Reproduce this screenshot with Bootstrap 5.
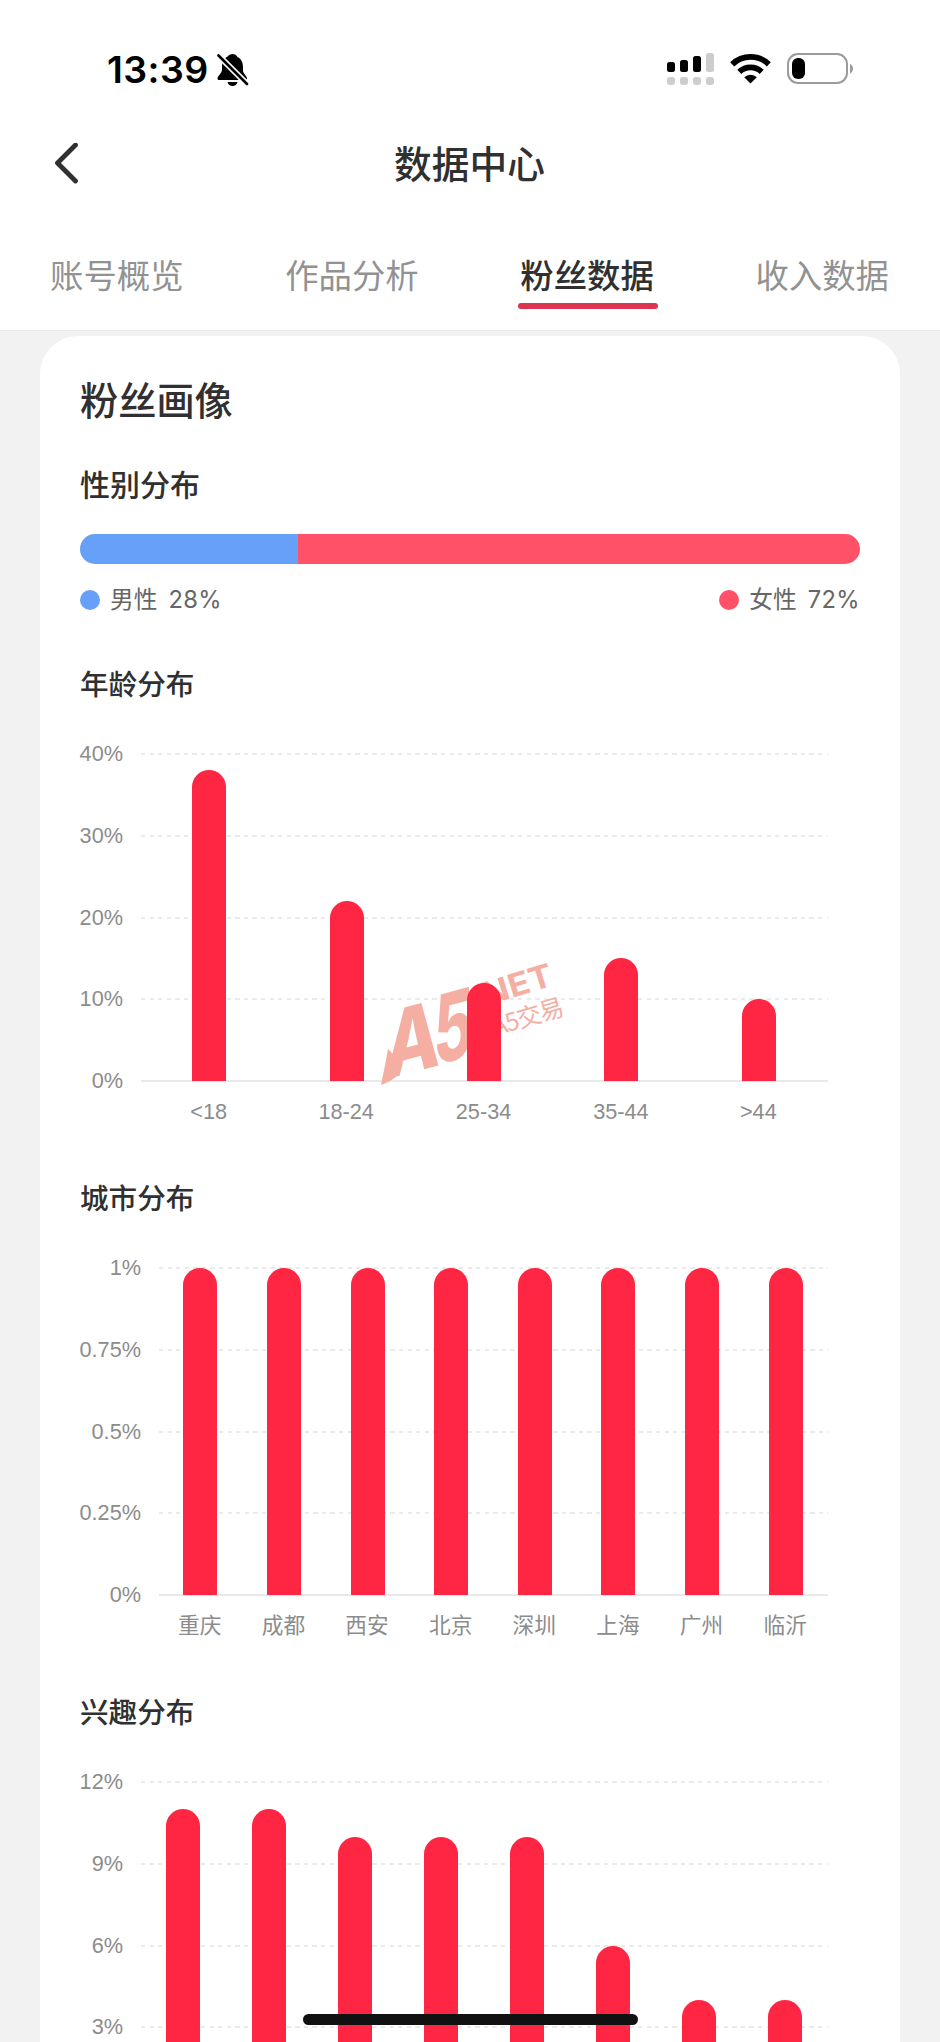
<!DOCTYPE html>
<html lang="zh-CN">
<head>
<meta charset="utf-8">
<meta name="viewport" content="width=device-width, initial-scale=1">
<title>数据中心</title>
<link rel="stylesheet" href="https://cdn.jsdelivr.net/npm/bootstrap@5.3.0/dist/css/bootstrap.min.css">
<style>
  html, body { height: 2042px; overflow: hidden; }
  body { background: #f2f2f2; color: #303030; font-family: "Liberation Sans", "Noto Sans CJK SC", sans-serif; }
  svg { display: block; flex: none; }
  .app-head { height: 331px; border-bottom: 1px solid #ebebeb; }
  .status { height: 110px; padding: 53px 86px 0 107px; color: #000; }
  .clock { font: 600 37.5px/34px Inter, sans-serif; letter-spacing: .45px; width: 110px; }
  .title-bar { height: 108px; padding: 0 53px; }
  .title-bar h1 { font-size: 37.7px; line-height: 56px; font-weight: 500; padding-top: 2px; }
  .tabs { padding: 32px 51px 0 50px; }
  .tabs .nav-link { padding: 0; font-size: 33.4px; line-height: 54px; color: #929292; }
  .tabs .nav-link.active { color: #303030; font-weight: 500; position: relative; }
  .tabs .nav-link.active::after { content: ""; position: absolute; left: -2px; right: -4px; top: 53px; height: 6px; border-radius: 3px; background: #dc354f; }
  .panel { margin: 5px 40px 0; padding: 38px 40px 0; height: 1706px; overflow: hidden; border-radius: 38px 38px 0 0; }
  .panel h2 { font-size: 38.2px; line-height: 56px; font-weight: 500; margin: 0 0 38px; }
  .panel h3 { font-size: 28.6px; line-height: 36px; font-weight: 500; margin: 0; }
  .panel .gender-title { font-size: 30px; margin-bottom: 30px; }
  .gender { height: 30px; border-radius: 15px; }
  .male { background: #66a0f8; }
  .female { background: #ff5268; }
  .legend-row { font: 23.7px/34px Inter, "Noto Sans CJK SC", sans-serif; color: #666; margin-top: 19px; margin-bottom: 50px; }
  .num { margin-left: 11px; letter-spacing: .4px; }
  .dot { width: 20px; height: 20px; border-radius: 50%; margin-right: 10px; }
  .section { height: 514px; }
  .chart { margin: 51px 32px 0 0; gap: 18px; font-size: 21.7px; color: #8c8c8c; }
  .y-axis { height: 327px; width: 43px; text-align: right; white-space: nowrap; }
  .y-wide { width: 61px; }
  .y-axis span { height: 0; line-height: 0; align-self: flex-end; }
  .plot { height: 327px; }
  .grid-lines i { height: 2px; margin: -1px 0; background: repeating-linear-gradient(90deg, #eaeaea 0 4.3px, transparent 4.3px 8.57px); }
  .grid-lines i:last-child { background: #e9e9e9; }
  .bars > div { flex: 1 1 0; }
  .bars b { width: 34px; margin-left: -1px; border-radius: 17px 17px 0 0; background: #ff2643; }
  .x-axis { margin-top: 14px; line-height: 34px; }
  .x-axis span { flex: 1 1 0; text-align: center; margin-left: -1px; margin-right: 1px; }
  .seal { left: 229px; top: 196px; }
  .home-bar { left: 303px; top: 2014px; width: 335px; height: 11px; border-radius: 6px; background: #111; }
</style>
</head>
<body class="position-relative">
<header class="app-head bg-white">
  <div class="status d-flex align-items-start">
    <div class="clock">13:39</div>
    <svg width="32" height="34" viewBox="0 0 32 34">
      <path d="M15.500 1c-2 0-4 1-4.800 2.500C6.500 5.500 5 9 5 14v3c0 3-4.500 6-4.500 8.500 0 1 .8 1.500 2 1.500h26c1 0 1.500-.4 1.500-1.300 0-2.700-4-5-4-8.200v-3c0-5-1.500-8.500-5.500-10.500C19.500 2 17.500 1 15.500 1Z"/>
      <path d="M10.500 29h10c-.7 2.500-2.500 4-5 4s-4.300-1.500-5-4Z"/>
      <path d="M0 1 31 32" stroke="#fff" stroke-width="6"/>
      <path d="M1.500 2.500 30 31" stroke="#000" stroke-width="2.600" stroke-linecap="round"/>
    </svg>
    <svg class="ms-auto" width="48" height="32" viewBox="0 0 48 32">
      <rect x="0" y="9" width="8" height="10" rx="2.500"/><rect x="13" y="7" width="8" height="12" rx="2.500"/><rect x="26" y="3" width="8" height="16" rx="2.500"/>
      <g fill="#cdcdcd"><rect x="39" y="0" width="8" height="19" rx="2.500"/><rect x="0" y="24" width="8" height="8" rx="3"/><rect x="13" y="24" width="8" height="8" rx="3"/><rect x="26" y="24" width="8" height="8" rx="3"/><rect x="39" y="24" width="8" height="8" rx="3"/></g>
    </svg>
    <svg width="41" height="31" viewBox="0 0 41 31" style="margin-left:15px">
      <g fill="none" stroke="#000" stroke-width="5.800"><path d="M2.200 11.300a26.500 26.500 0 0 1 36.600 0"/><path d="M9.300 18.900a16.200 16.200 0 0 1 22.400 0"/></g>
      <path d="M20.500 30.500 14.200 24.200a9 9 0 0 1 12.600 0Z"/>
    </svg>
    <svg width="67" height="32" viewBox="0 0 67 32" style="margin-left:16px">
      <rect x="1" y="1" width="59" height="29" rx="10" fill="none" stroke="#9b9b9b" stroke-width="2"/><path d="M63 11c4 1.500 4 8 0 9.500Z" fill="#9b9b9b"/><rect x="5" y="5" width="13" height="21" rx="6"/>
    </svg>
  </div>
  <div class="title-bar d-flex align-items-center justify-content-between">
    <svg width="28" height="42" viewBox="0 0 28 42"><path d="M22.500 2 4.500 20l18 18" fill="none" stroke="#303030" stroke-width="4.800" stroke-linecap="round" stroke-linejoin="round"/></svg>
    <h1 class="m-0">数据中心</h1>
    <span style="width:29px"></span>
  </div>
  <nav class="tabs nav justify-content-between">
    <a class="nav-link">账号概览</a><a class="nav-link">作品分析</a><a class="nav-link active">粉丝数据</a><a class="nav-link">收入数据</a>
  </nav>
</header>
<main class="panel bg-white">
  <h2>粉丝画像</h2>
  <h3 class="gender-title">性别分布</h3>
  <div class="progress gender"><div class="progress-bar male" style="width:28%"></div><div class="progress-bar female" style="width:72%"></div></div>
  <div class="legend-row d-flex justify-content-between">
    <span class="d-flex align-items-center"><i class="dot male"></i>男性<span class="num">28%</span></span>
    <span class="d-flex align-items-center"><i class="dot female"></i>女性<span class="num">72%</span></span>
  </div>

  <section class="section">
    <h3>年龄分布</h3>
    <div class="chart d-flex">
      <div class="y-axis d-flex flex-column justify-content-between"><span>40%</span><span>30%</span><span>20%</span><span>10%</span><span>0%</span></div>
      <div class="flex-grow-1">
        <div class="plot position-relative">
          <div class="grid-lines position-absolute top-0 start-0 w-100 h-100 d-flex flex-column justify-content-between"><i></i><i></i><i></i><i></i><i></i></div>
          <svg class="seal position-absolute" width="210" height="150" viewBox="370 950 210 150" fill="#f4aea2">
            <g transform="translate(384 1080) rotate(-15) skewX(-16)" font-family="Inter, sans-serif" font-weight="800"><text font-size="89" textLength="58" lengthAdjust="spacingAndGlyphs">A</text><text x="51" y="-1" font-size="92" textLength="41" lengthAdjust="spacingAndGlyphs">5</text></g>
            <path d="M381 1085q4-19 7-36l14 14q-2 16-21 22Z"/>
            <text transform="translate(486 1006) rotate(-17)" font-family="Inter, sans-serif" font-weight="700" font-size="32" textLength="72" lengthAdjust="spacingAndGlyphs">NET</text>
            <text transform="translate(495 1036) rotate(-17)" font-family="Noto Sans CJK SC, sans-serif" font-size="24.500" textLength="74">A5交易</text>
          </svg>
          <div class="bars position-relative h-100 d-flex">
            <div class="d-flex align-items-end justify-content-center"><b style="height:95%"></b></div>
            <div class="d-flex align-items-end justify-content-center"><b style="height:55%"></b></div>
            <div class="d-flex align-items-end justify-content-center"><b style="height:30%"></b></div>
            <div class="d-flex align-items-end justify-content-center"><b style="height:37.5%"></b></div>
            <div class="d-flex align-items-end justify-content-center"><b style="height:25%"></b></div>
          </div>
        </div>
        <div class="x-axis d-flex"><span>&lt;18</span><span>18-24</span><span>25-34</span><span>35-44</span><span>&gt;44</span></div>
      </div>
    </div>
  </section>

  <section class="section">
    <h3>城市分布</h3>
    <div class="chart d-flex">
      <div class="y-axis y-wide d-flex flex-column justify-content-between"><span>1%</span><span>0.75%</span><span>0.5%</span><span>0.25%</span><span>0%</span></div>
      <div class="flex-grow-1">
        <div class="plot position-relative">
          <div class="grid-lines position-absolute top-0 start-0 w-100 h-100 d-flex flex-column justify-content-between"><i></i><i></i><i></i><i></i><i></i></div>
          <div class="bars position-relative h-100 d-flex">
            <div class="d-flex justify-content-center"><b class="h-100"></b></div>
            <div class="d-flex justify-content-center"><b class="h-100"></b></div>
            <div class="d-flex justify-content-center"><b class="h-100"></b></div>
            <div class="d-flex justify-content-center"><b class="h-100"></b></div>
            <div class="d-flex justify-content-center"><b class="h-100"></b></div>
            <div class="d-flex justify-content-center"><b class="h-100"></b></div>
            <div class="d-flex justify-content-center"><b class="h-100"></b></div>
            <div class="d-flex justify-content-center"><b class="h-100"></b></div>
          </div>
        </div>
        <div class="x-axis d-flex"><span>重庆</span><span>成都</span><span>西安</span><span>北京</span><span>深圳</span><span>上海</span><span>广州</span><span>临沂</span></div>
      </div>
    </div>
  </section>

  <section class="section">
    <h3>兴趣分布</h3>
    <div class="chart d-flex">
      <div class="y-axis d-flex flex-column justify-content-between"><span>12%</span><span>9%</span><span>6%</span><span>3%</span><span></span></div>
      <div class="flex-grow-1">
        <div class="plot position-relative">
          <div class="grid-lines position-absolute top-0 start-0 w-100 h-100 d-flex flex-column justify-content-between"><i></i><i></i><i></i><i></i><i></i></div>
          <div class="bars position-relative h-100 d-flex">
            <div class="d-flex align-items-end justify-content-center"><b style="height:91.67%"></b></div>
            <div class="d-flex align-items-end justify-content-center"><b style="height:91.67%"></b></div>
            <div class="d-flex align-items-end justify-content-center"><b style="height:83.33%"></b></div>
            <div class="d-flex align-items-end justify-content-center"><b style="height:83.33%"></b></div>
            <div class="d-flex align-items-end justify-content-center"><b style="height:83.33%"></b></div>
            <div class="d-flex align-items-end justify-content-center"><b style="height:50%"></b></div>
            <div class="d-flex align-items-end justify-content-center"><b style="height:33.33%"></b></div>
            <div class="d-flex align-items-end justify-content-center"><b style="height:33.33%"></b></div>
          </div>
        </div>
      </div>
    </div>
  </section>
</main>
<div class="home-bar position-absolute"></div>
<script src="https://cdn.jsdelivr.net/npm/bootstrap@5.3.0/dist/js/bootstrap.bundle.min.js"></script>
</body>
</html>
